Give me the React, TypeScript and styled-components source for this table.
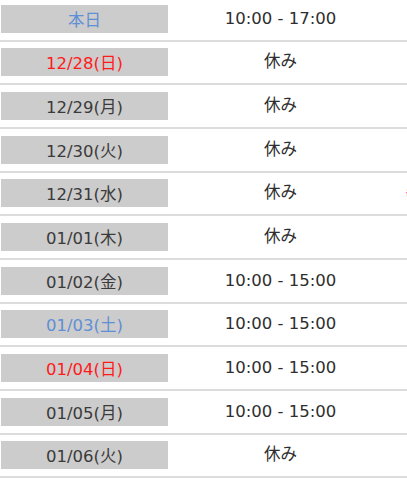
import React from "react";
import styled, { createGlobalStyle } from "styled-components";

const Global = createGlobalStyle`
  html, body { margin: 0; padding: 0; background: #fff; overflow: hidden; }
  body { font-family: "DejaVu Sans", "Noto Sans CJK JP", sans-serif; }
`;

const List = styled.div`
  margin-top: -2px;
  width: 420px;
`;

const Row = styled.div`
  display: grid;
  grid-template-columns: 167px 225px 1fr;
  align-items: center;
  padding: 6.83px 0 6.83px 1px;
  border-bottom: 2px solid #dcdcdc;
`;

type Tone = "normal" | "blue" | "red";

const DateCell = styled.div<{ $tone: Tone }>`
  background: #cccccc;
  height: 28px;
  display: flex;
  align-items: center;
  justify-content: center;
  font-size: 16.5px;
  color: ${(p) => (p.$tone === "blue" ? "#5f8fd4" : p.$tone === "red" ? "#ff1a1a" : "#3a3a3a")};
`;

const HoursCell = styled.div`
  text-align: center;
  font-size: 16.5px;
  color: #2e2e2e;
  line-height: 28px;
`;

const Note = styled.div`
  padding-left: 12px;
  font-size: 12px;
  color: #f06fa0;
  white-space: nowrap;
`;

const rows: { date: string; tone: Tone; hours: string; note?: string }[] = [
  { date: "本日", tone: "blue", hours: "10:00 - 17:00" },
  { date: "12/28(日)", tone: "red", hours: "休み" },
  { date: "12/29(月)", tone: "normal", hours: "休み" },
  { date: "12/30(火)", tone: "normal", hours: "休み" },
  { date: "12/31(水)", tone: "normal", hours: "休み", note: "※" },
  { date: "01/01(木)", tone: "normal", hours: "休み" },
  { date: "01/02(金)", tone: "normal", hours: "10:00 - 15:00" },
  { date: "01/03(土)", tone: "blue", hours: "10:00 - 15:00" },
  { date: "01/04(日)", tone: "red", hours: "10:00 - 15:00" },
  { date: "01/05(月)", tone: "normal", hours: "10:00 - 15:00" },
  { date: "01/06(火)", tone: "normal", hours: "休み" },
];

export default function App() {
  return (
    <>
      <Global />
      <List>
        {rows.map((r) => (
          <Row key={r.date}>
            <DateCell $tone={r.tone}>{r.date}</DateCell>
            <HoursCell>{r.hours}</HoursCell>
            <Note>{r.note ?? ""}</Note>
          </Row>
        ))}
      </List>
    </>
  );
}
